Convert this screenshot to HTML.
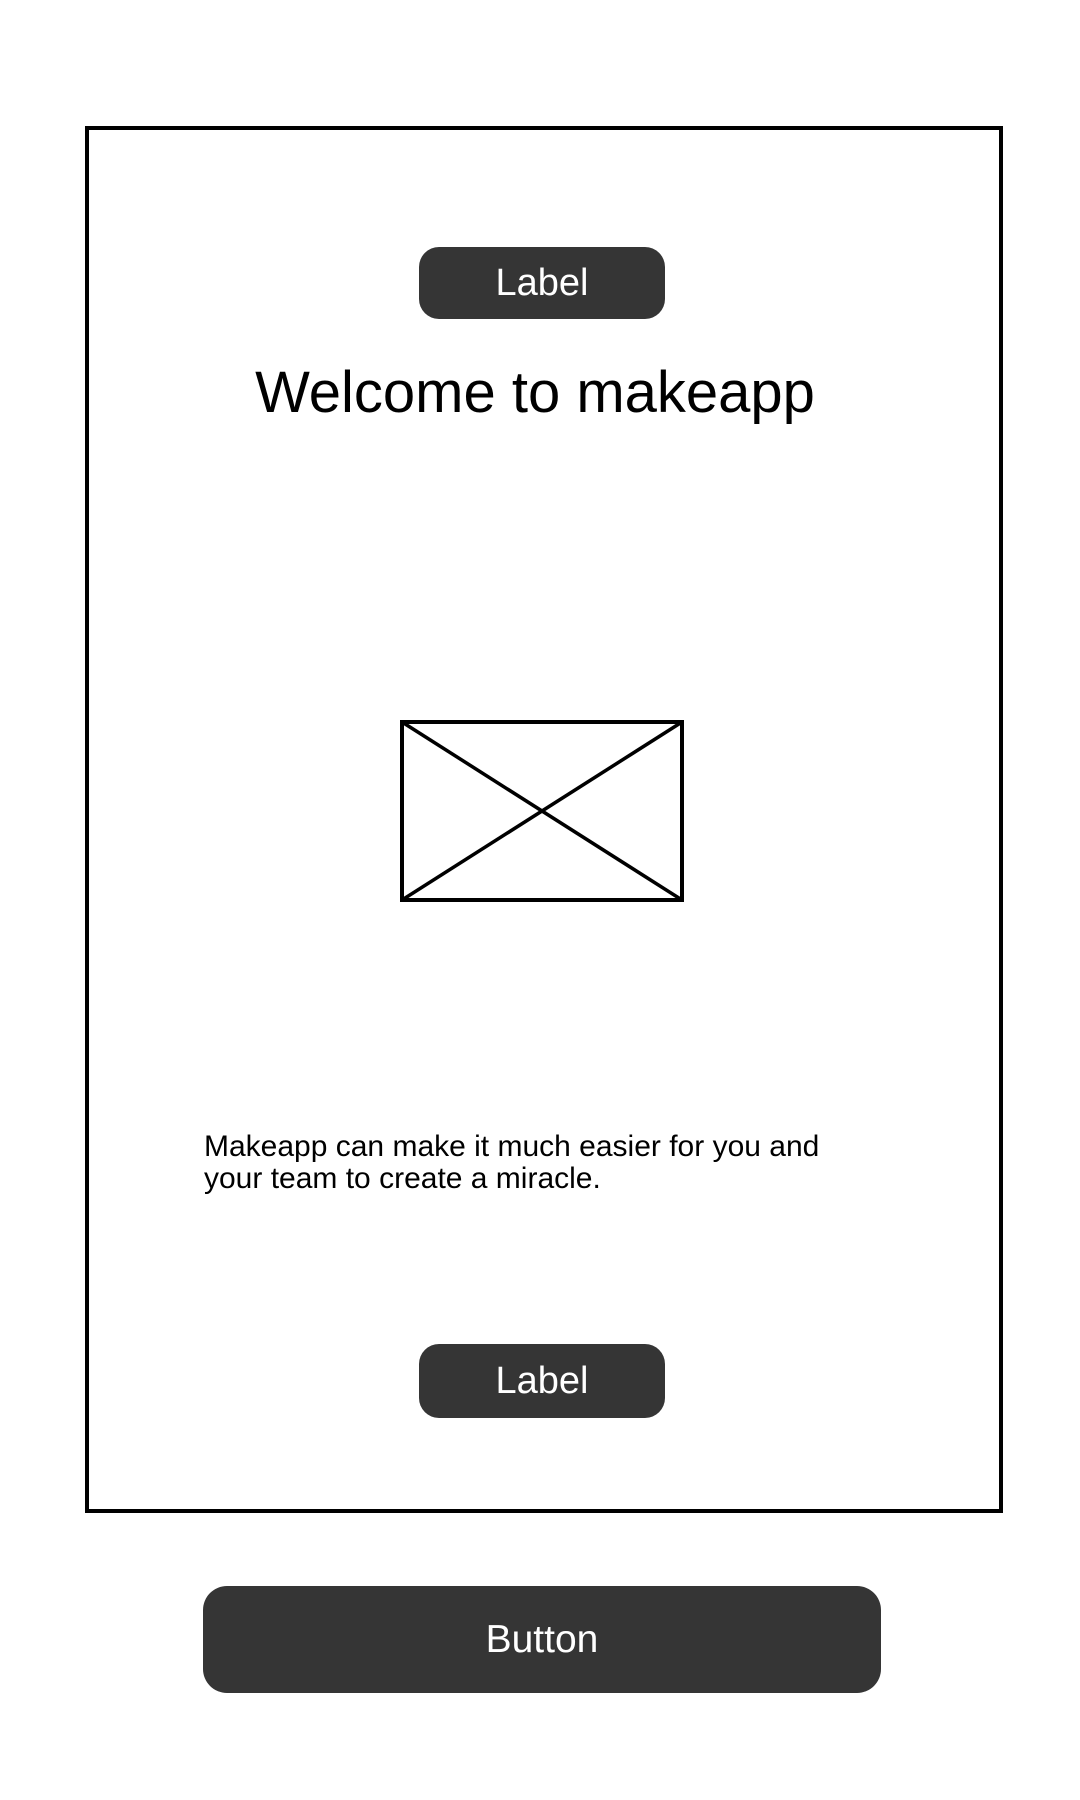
<!DOCTYPE html>
<html><head><style>
html,body{margin:0;padding:0;background:#fff;width:1080px;height:1800px;overflow:hidden;font-family:"Liberation Sans",Arial,sans-serif;}
.frame{position:absolute;left:85px;top:126px;width:910px;height:1379px;border:4px solid #000;}
.pill{position:absolute;background:#353535;color:#fff;text-align:center;}
.lbl{left:419px;width:246px;height:72px;border-radius:20px;font-size:38px;line-height:72px;}
.title{position:absolute;left:-5px;width:1080px;text-align:center;top:358px;font-size:58px;line-height:70px;color:#000;}
.para{position:absolute;left:204px;top:1131px;font-size:30px;line-height:32px;color:#000;}
</style></head><body>
<div class="frame"></div>
<div class="pill lbl" style="top:247px">Label</div>
<div class="title">Welcome to makeapp</div>
<svg style="position:absolute;left:0;top:0" width="1080" height="1800">
<rect x="402" y="722" width="280" height="178" fill="none" stroke="#000" stroke-width="4"/>
<line x1="402" y1="722" x2="682" y2="900" stroke="#000" stroke-width="3.5"/>
<line x1="402" y1="900" x2="682" y2="722" stroke="#000" stroke-width="3.5"/>
</svg>
<div class="para">Makeapp can make it much easier for you and<br>your team to create a miracle.</div>
<div class="pill lbl" style="top:1344px;height:74px;line-height:74px">Label</div>
<div class="pill" style="left:203px;top:1586px;width:678px;height:107px;border-radius:24px;font-size:39px;line-height:107px">Button</div>
</body></html>
